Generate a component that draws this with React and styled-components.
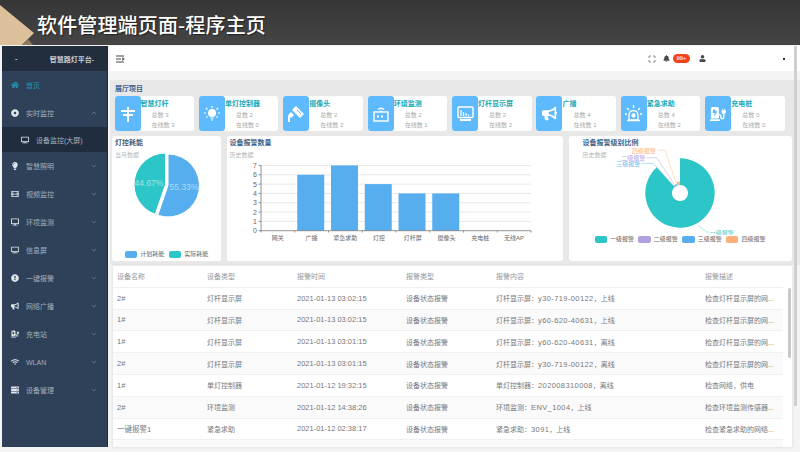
import styled, { createGlobalStyle } from 'styled-components';
import {
  FaHome,
  FaDotCircle,
  FaLightbulb,
  FaFilm,
  FaDesktop,
  FaBullhorn,
  FaChargingStation,
  FaWifi,
  FaServer,
  FaUser,
  FaBell,
  FaExclamationCircle,
  FaTv,
} from 'react-icons/fa';
import { ChevronDown, ChevronUp, Maximize } from 'lucide-react';

const GlobalStyle = createGlobalStyle`
  html, body {
    margin: 0;
    padding: 0;
    background: #fff;
    overflow: hidden;
  }
  body, svg text {
    font-family: "Liberation Sans", "Noto Sans CJK SC", sans-serif;
  }
  * {
    box-sizing: border-box;
  }
`;

const Page = styled.div`
  position: relative;
  width: 800px;
  height: 452px;
  overflow: hidden;
  background: #f4f4f4;
`;
const TitleBar = styled.header`
  position: relative;
  height: 45px;
  padding-left: 37px;
  background: linear-gradient(#363636, #454545);
  color: #fff;
  font-family: "Noto Sans CJK SC", sans-serif;
  font-size: 20px;
  font-weight: 500;
  line-height: 50px;
  letter-spacing: 0.15px;
  text-shadow: 1px 1px 1px #222;
`;
const Ribbon = styled.svg`
  position: absolute;
  left: 0;
  top: 0;
`;
const Body = styled.div`
  display: flex;
  height: 407px;
  padding-top: 1px;
`;
const Sidebar = styled.nav`
  flex: none;
  width: 106px;
  height: 401px;
  margin-left: 2px;
  background: #2e4158;
  border-right: 1px solid #1c2b3c;
  color: #a3afbf;
  font-size: 7px;
`;
const Brand = styled.div`
  display: flex;
  justify-content: space-between;
  align-items: center;
  height: 25px;
  padding: 0 13px 0 13px;
  background: #222d3d;
  color: #c9ced6;
  font-weight: 700;
`;
const MenuRow = styled.div`
  display: flex;
  align-items: center;
  gap: 7px;
  height: 28px;
  padding: 0 9px 0 8px;
  color: ${({ $active }) => ($active ? '#1d93b5' : 'inherit')};
`;
const MenuIcon = styled.span`
  display: flex;
  justify-content: center;
  width: 9px;
  color: ${({ $active }) => ($active ? '#1d93b5' : '#dfe5ec')};
  font-size: 8px;
`;
const MenuLabel = styled.span`
  flex: 1;
`;
const SubRow = styled(MenuRow)`
  height: 25px;
  padding-left: 18px;
  background: #1f2d3f;
`;
const Main = styled.main`
  flex: 1;
  min-width: 0;
  margin-left: 2px;
  display: flex;
  flex-direction: column;
`;
const TopBar = styled.div`
  display: flex;
  align-items: center;
  height: 25px;
  padding: 0 15px 0 6px;
  background: #fff;
  color: #4a4a4a;
`;
const TopTools = styled.div`
  display: flex;
  align-items: center;
  gap: 7px;
  margin-left: auto;
`;
const Badge = styled.span`
  width: 17px;
  height: 9px;
  margin: 0 2px 0 -4px;
  border-radius: 5px;
  background: #f2431b;
  color: #ffd9cf;
  font-size: 6px;
  font-weight: 700;
  line-height: 9px;
  text-align: center;
`;
const Caret = styled.span`
  width: 2px;
  height: 2px;
  margin-left: 70px;
  background: #333;
`;
const Content = styled.div`
  flex: 1;
  margin-top: 9px;
  padding: 0 8px 0 2px;
  background: linear-gradient(#e8e8e8 185px, #f4f4f4 185px);
`;
const SectionTitle = styled.h2`
  margin: 0;
  height: 16px;
  padding: 1px 0 0 3px;
  color: #3f6190;
  font-size: 7px;
  font-weight: 700;
  line-height: 16px;
`;
const TileRow = styled.div`
  display: grid;
  grid-template-columns: repeat(8, 79.5px);
  gap: 4.9px;
  padding-left: 2.5px;
`;
const Tile = styled.div`
  display: flex;
  height: 35px;
  border-radius: 3px;
  background: #fff;
`;
const TileIcon = styled.div`
  flex: none;
  display: flex;
  align-items: center;
  justify-content: center;
  width: 26px;
  border-radius: 3px;
  background: #5fbafd;
  color: #fff;
`;
const TileText = styled.div`
  flex: 1;
  font-size: 6px;
  color: #a9a9a9;
`;
const TileName = styled.div`
  height: 14px;
  color: #17a8b8;
  font-size: 7px;
  font-weight: 700;
  line-height: 15px;
`;
const TileStat = styled.div`
  height: 10px;
  padding-left: 11px;
  line-height: 11px;
`;
const ChartRow = styled.div`
  display: grid;
  grid-template-columns: 109px 336.5px 223px;
  gap: 5.5px;
  margin-top: 5px;
`;
const ChartCard = styled.section`
  position: relative;
  height: 125px;
  border-radius: 3px;
  background: #fff;
`;
const ChartHead = styled.div`
  position: absolute;
  left: ${({ $left }) => $left || 3}px;
  top: 2px;
`;
const ChartTitle = styled.h3`
  margin: 0;
  height: 10px;
  color: #3f5f88;
  font-size: 7px;
  font-weight: 700;
  line-height: 10px;
`;
const ChartSub = styled.div`
  margin-top: 2px;
  color: #b8b8b8;
  font-size: 6px;
  line-height: 10px;
`;
const ChartSvg = styled.svg`
  display: block;
`;
const Legend = styled.div`
  display: flex;
  justify-content: center;
  gap: 4.3px;
  color: #666;
  font-size: 6px;
  line-height: 8px;
`;
const LegendItem = styled.span`
  display: flex;
  align-items: center;
  gap: 3px;
`;
const Swatch = styled.i`
  width: 12.5px;
  height: 7px;
  border-radius: 2px;
  background: ${({ $color }) => $color};
`;
const TableCard = styled.div`
  height: 181px;
  margin: 5px 0 0 1px;
  overflow: hidden;
  background: #fff;
  box-shadow: 0 0 3px rgba(0, 0, 0, 0.12);
  color: #76787c;
  font-size: 7px;
`;
const Grid = styled.div`
  display: grid;
  grid-template-columns: 90px 90px 109px 90px 209px 78px;
  align-items: center;
  width: 670px;
  height: 21.8px;
  padding-left: 4px;
  border-bottom: 1px solid #eef0f4;
  background: ${({ $striped }) => ($striped ? '#fafafa' : '#fff')};
  color: ${({ $head }) => ($head ? '#94979c' : 'inherit')};
`;
const Cell = styled.span`
  overflow: hidden;
  white-space: nowrap;
  text-overflow: ellipsis;
`;
const TimeCell = styled(Cell)`
  font-size: 7.5px;
`;
const Code = styled.span`
  font-size: 7.5px;
  letter-spacing: 0.4px;
`;
const TableThumb = styled.div`
  position: absolute;
  left: 788px;
  top: 288px;
  width: 3px;
  height: 70px;
  border-radius: 2px;
  background: #c9c9c9;
`;
const PageThumb = styled.div`
  position: absolute;
  left: 794px;
  top: 46px;
  width: 2.5px;
  height: 360px;
  background: #cfcfcf;
`;

const menu = [
  { label: '智慧照明', icon: <FaLightbulb /> },
  { label: '视频监控', icon: <FaFilm /> },
  { label: '环境监测', icon: <FaDesktop /> },
  { label: '信息屏', icon: <FaTv /> },
  { label: '一键报警', icon: <FaExclamationCircle /> },
  { label: '网络广播', icon: <FaBullhorn /> },
  { label: '充电站', icon: <FaChargingStation /> },
  { label: 'WLAN', icon: <FaWifi /> },
  { label: '设备管理', icon: <FaServer /> },
];

const PoleIcon = () => (
  <svg width="18" height="18" viewBox="0 0 18 18" fill="none" stroke="#fff" strokeWidth="2">
    <path d="M9 2v15M2 6h14M4 10h10" />
    <path d="M3 5v2M15 5v2" />
  </svg>
);
const BulbIcon = () => (
  <svg width="18" height="18" viewBox="0 0 18 18" fill="none" stroke="#fff" strokeWidth="1.2">
    <circle cx="9" cy="8" r="3.4" fill="#fff" />
    <path d="M7.5 13h3M8 15h2M9 1v2M3 3l1.5 1.5M15 3l-1.5 1.5M1 8h2M15 8h2M3.5 12.5l1-1M14.5 12.5l-1-1" />
  </svg>
);
const CameraIcon = () => (
  <svg width="20" height="20" viewBox="0 0 20 20" fill="#fff">
    <path d="M10 2l8 8-4 4-8-8zM5 8l3 3-2.5 2.5H4V18H2v-6l1-2z" />
    <path d="M11 6l4 4" stroke="#5fbafd" strokeWidth="1" />
  </svg>
);
const RadioIcon = () => (
  <svg width="18" height="18" viewBox="0 0 18 18" fill="none" stroke="#fff" strokeWidth="1.4">
    <rect x="2" y="7" width="14" height="9" />
    <path d="M5 11.5h8" strokeWidth="2" strokeDasharray="2 2" />
    <path d="M6 4.5a4.5 4.5 0 0 1 6 0" />
    <path d="M8 6.5a2 2 0 0 1 2 0" />
  </svg>
);
const ScreenIcon = () => (
  <svg width="19" height="19" viewBox="0 0 19 19" fill="none" stroke="#fff" strokeWidth="1.4">
    <rect x="2" y="3" width="15" height="10.5" rx="1" />
    <path d="M5 12V6M7.5 12V8M10 12V9M12.5 12v-1.5" strokeWidth="1.2" />
    <path d="M4 16h11" strokeWidth="2" />
  </svg>
);
const AlarmIcon = () => (
  <svg width="19" height="19" viewBox="0 0 19 19" fill="none" stroke="#fff" strokeWidth="1.3">
    <path d="M5 16v-5a4.5 4.5 0 0 1 9 0v5z" />
    <path d="M3 16.5h13M9.5 1v3M3 4l2 2M16 4l-2 2M1 10h2M16 10h2" />
    <circle cx="9.5" cy="11.5" r="1.5" fill="#fff" />
  </svg>
);

const tiles = [
  { name: '智慧灯杆', total: 3, online: 3, icon: <PoleIcon /> },
  { name: '单灯控制器', total: 2, online: 0, icon: <BulbIcon /> },
  { name: '摄像头', total: 2, online: 2, icon: <CameraIcon /> },
  { name: '环境监测', total: 2, online: 1, icon: <RadioIcon /> },
  { name: '灯杆显示屏', total: 2, online: 2, icon: <ScreenIcon /> },
  { name: '广播', total: 4, online: 1, icon: <FaBullhorn size={15} /> },
  { name: '紧急求助', total: 4, online: 2, icon: <AlarmIcon /> },
  { name: '充电桩', total: 0, online: 0, icon: <FaChargingStation size={16} /> },
];

const bars = [
  ['网关', 0],
  ['广播', 6],
  ['紧急求助', 7],
  ['灯控', 5],
  ['灯杆屏', 4],
  ['摄像头', 4],
  ['充电桩', 0],
  ['无线AP', 0],
];

const rows = [
  { name: '2#', type: '灯杆显示屏', time: '2021-01-13 03:02:15', prefix: '灯杆显示屏：', code: 'y30-719-00122', state: '，上线', desc: '检查灯杆显示屏的网...' },
  { name: '1#', type: '灯杆显示屏', time: '2021-01-13 03:02:15', prefix: '灯杆显示屏：', code: 'y60-620-40631', state: '，上线', desc: '检查灯杆显示屏的网...' },
  { name: '1#', type: '灯杆显示屏', time: '2021-01-13 03:01:15', prefix: '灯杆显示屏：', code: 'y60-620-40631', state: '，离线', desc: '检查灯杆显示屏的网...' },
  { name: '2#', type: '灯杆显示屏', time: '2021-01-13 03:01:15', prefix: '灯杆显示屏：', code: 'y30-719-00122', state: '，离线', desc: '检查灯杆显示屏的网...' },
  { name: '1#', type: '单灯控制器', time: '2021-01-12 19:32:15', prefix: '单灯控制器：', code: '202008310008', state: '，离线', desc: '检查网络，供电' },
  { name: '2#', type: '环境监测', time: '2021-01-12 14:38:26', prefix: '环境监测：', code: 'ENV_1004', state: '，上线', desc: '检查环境监测传感器...' },
  { name: '一键报警1', type: '紧急求助', time: '2021-01-12 02:38:17', prefix: '紧急求助：', code: '3091', state: '，上线', desc: '检查紧急求助的网络...' },
];

// 扇形路径，角度从 12 点方向顺时针
function arc(cx, cy, r, from, to, inner = 0) {
  const pt = (rad, a) => {
    const t = ((a - 90) * Math.PI) / 180;
    return `${(cx + rad * Math.cos(t)).toFixed(2)} ${(cy + rad * Math.sin(t)).toFixed(2)}`;
  };
  const large = to - from > 180 ? 1 : 0;
  return `M${pt(inner, from)}L${pt(r, from)}A${r} ${r} 0 ${large} 1 ${pt(r, to)}L${pt(inner, to)}${
    inner ? `A${inner} ${inner} 0 ${large} 0 ${pt(inner, from)}` : ''
  }Z`;
}

function EnergyChart() {
  return (
    <ChartCard>
      <ChartHead>
        <ChartTitle>灯控耗能</ChartTitle>
        <ChartSub>当月数据</ChartSub>
      </ChartHead>
      <ChartSvg width="109" height="114" viewBox="112 136 109 114">
        <path d={arc(168, 185.5, 31.5, 0, 199)} fill="#56aeef" stroke="#fff" strokeWidth="1" />
        <path d={arc(165.5, 184.5, 31.5, 199, 360)} fill="#2cc5c8" stroke="#fff" strokeWidth="1" />
        <text x="184" y="189.500" fontSize="8.500" fill="#a9dcf8" textAnchor="middle">55.33%</text>
        <text x="149" y="186" fontSize="8.500" fill="#a5e6e4" textAnchor="middle">44.67%</text>
      </ChartSvg>
      <Legend>
        <LegendItem><Swatch $color="#56aeef" />计划耗能</LegendItem>
        <LegendItem><Swatch $color="#2cc5c8" />实际耗能</LegendItem>
      </Legend>
    </ChartCard>
  );
}

function AlarmCountChart() {
  const step = 33.75;
  const unit = 9.32;
  return (
    <ChartCard>
      <ChartHead $left={3}>
        <ChartTitle>设备报警数量</ChartTitle>
        <ChartSub>历史数据</ChartSub>
      </ChartHead>
      <ChartSvg width="336" height="125" viewBox="227 136 336 125">
        {[0, 1, 2, 3, 4, 5, 6, 7].map((n) => (
          <g key={n}>
            {n > 0 && <line x1="261" x2="531" y1={230.7 - n * unit} y2={230.7 - n * unit} stroke="#e8e8e8" />}
            <line x1="258.5" x2="261" y1={230.7 - n * unit} y2={230.7 - n * unit} stroke="#666" strokeWidth="0.7" />
            <text x="257" y={233.2 - n * unit} fontSize="7" fill="#666" textAnchor="end">{n}</text>
          </g>
        ))}
        {bars.map(([name, value], i) => (
          <g key={name}>
            {value > 0 && (
              <rect x={263.5 + i * step} y={230.7 - value * unit} width="27" height={value * unit} fill="#56aeef" />
            )}
            <line x1={261 + i * step} x2={261 + i * step} y1="230.7" y2="232.5" stroke="#666" strokeWidth="0.7" />
            <text x={261 + (i + 0.5) * step} y="240" fontSize="6" fill="#666" textAnchor="middle">{name}</text>
          </g>
        ))}
        <line x1="261" x2="531" y1="230.7" y2="230.7" stroke="#777" strokeWidth="0.8" />
        <line x1="531" x2="531" y1="230.7" y2="232.5" stroke="#666" strokeWidth="0.7" />
        <line x1="261" x2="261" y1="165.5" y2="230.7" stroke="#777" strokeWidth="0.8" />
      </ChartSvg>
    </ChartCard>
  );
}

function AlarmLevelChart() {
  return (
    <ChartCard>
      <ChartHead $left={14}>
        <ChartTitle>设备报警级别比例</ChartTitle>
        <ChartSub>历史数据</ChartSub>
      </ChartHead>
      <ChartSvg width="223" height="99" viewBox="569 136 223 99">
        <path d={arc(680, 193, 34.7, 0, 318, 8)} fill="#2cc5c8" />
        <path d={arc(680, 193, 11.5, 342, 360, 8)} fill="#ffb37a" />
        <path d={arc(680, 193, 9.5, 318, 342, 8)} fill="#5fb5f0" />
        <g fill="none" strokeWidth="0.7">
          <path d="M698.3 225.3l8.4 6.700h2" stroke="#7fdcde" />
          <path d="M676 183l-11-32.700h-7" stroke="#ffd2b0" />
          <path d="M674 184l-17.300-26.300h-10" stroke="#cdbcea" />
          <path d="M673 185l-19.700-21.700h-11.600" stroke="#9fd0f5" />
        </g>
        <g fontSize="6" textAnchor="middle">
          <text x="643.7" y="152.500" fill="#ffb37a">四级报警</text>
          <text x="633.3" y="160" fill="#b8a3e3">二级报警</text>
          <text x="628.3" y="165.500" fill="#6db8ee">三级报警</text>
          <text x="721.7" y="235" fill="#3fcfd1">一级报警</text>
        </g>
      </ChartSvg>
      <Legend>
        <LegendItem><Swatch $color="#2cc5c8" />一级报警</LegendItem>
        <LegendItem><Swatch $color="#b39ee0" />二级报警</LegendItem>
        <LegendItem><Swatch $color="#56aeef" />三级报警</LegendItem>
        <LegendItem><Swatch $color="#ffb07a" />四级报警</LegendItem>
      </Legend>
    </ChartCard>
  );
}

export default function App() {
  return (
    <Page>
      <GlobalStyle />
      <TitleBar>
        <Ribbon width="36" height="45" viewBox="0 0 36 45">
          <path d="M0 5L34 33L22 45H0z" fill="#dcc09a" />
          <path d="M22 45L28 39L33 45z" fill="#8c7758" />
        </Ribbon>
        软件管理端页面-程序主页
      </TitleBar>
      <Body>
        <Sidebar>
          <Brand>
            <span>-</span>
            <span>智慧路灯平台-</span>
          </Brand>
          <MenuRow $active>
            <MenuIcon $active><FaHome /></MenuIcon>
            <MenuLabel>首页</MenuLabel>
          </MenuRow>
          <MenuRow>
            <MenuIcon><FaDotCircle /></MenuIcon>
            <MenuLabel>实时监控</MenuLabel>
            <ChevronUp size={8} color="#75859a" />
          </MenuRow>
          <SubRow>
            <MenuIcon><FaTv /></MenuIcon>
            <MenuLabel>设备监控(大屏)</MenuLabel>
          </SubRow>
          {menu.map((item) => (
            <MenuRow key={item.label}>
              <MenuIcon>{item.icon}</MenuIcon>
              <MenuLabel>{item.label}</MenuLabel>
              <ChevronDown size={8} color="#75859a" />
            </MenuRow>
          ))}
        </Sidebar>
        <Main>
          <TopBar>
            <svg width="9" height="8" viewBox="0 0 9 8" fill="none" stroke="#444">
              <path d="M0 1h8M0 4h5M0 7h8" />
              <path d="M6.5 2.5l2 1.5-2 1.5z" fill="#444" strokeWidth="0.3" />
            </svg>
            <TopTools>
              <Maximize size={8} strokeWidth={2} />
              <FaBell size={7} />
              <Badge>99+</Badge>
              <FaUser size={7} />
              <Caret />
            </TopTools>
          </TopBar>
          <Content>
            <SectionTitle>展厅项目</SectionTitle>
            <TileRow>
              {tiles.map((tile) => (
                <Tile key={tile.name}>
                  <TileIcon>{tile.icon}</TileIcon>
                  <TileText>
                    <TileName>{tile.name}</TileName>
                    <TileStat>总数 {tile.total}</TileStat>
                    <TileStat>在线数 {tile.online}</TileStat>
                  </TileText>
                </Tile>
              ))}
            </TileRow>
            <ChartRow>
              <EnergyChart />
              <AlarmCountChart />
              <AlarmLevelChart />
            </ChartRow>
            <TableCard>
              <Grid $head>
                <Cell>设备名称</Cell>
                <Cell>设备类型</Cell>
                <Cell>报警时间</Cell>
                <Cell>报警类型</Cell>
                <Cell>报警内容</Cell>
                <Cell>报警描述</Cell>
              </Grid>
              {rows.map((row, i) => (
                <Grid key={i} $striped={i % 2 === 1}>
                  <TimeCell>{row.name}</TimeCell>
                  <Cell>{row.type}</Cell>
                  <TimeCell>{row.time}</TimeCell>
                  <Cell>设备状态报警</Cell>
                  <Cell>
                    {row.prefix}
                    <Code>{row.code}</Code>
                    {row.state}
                  </Cell>
                  <Cell>{row.desc}</Cell>
                </Grid>
              ))}
              <Grid $striped />
            </TableCard>
          </Content>
        </Main>
      </Body>
      <TableThumb />
      <PageThumb />
    </Page>
  );
}
